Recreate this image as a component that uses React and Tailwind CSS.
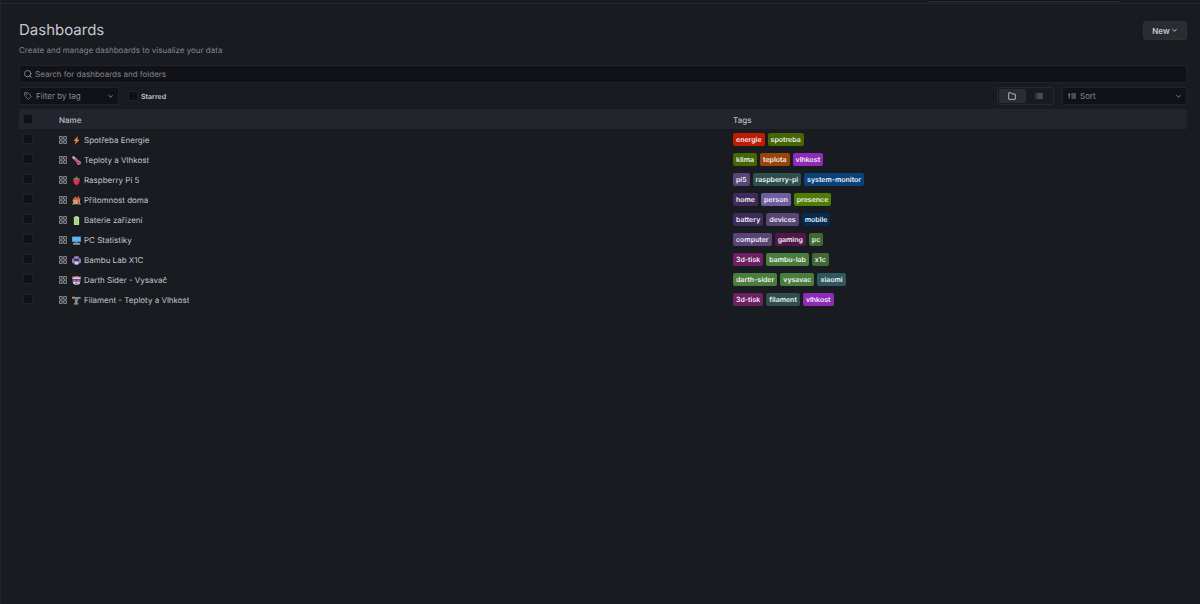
import React from 'react';

const ICONS = {
  bolt: (
    <>
      <path d="M16 0 4 13h6L6 24l14-14h-6z" fill="#f0703f" />
      <path d="M14 3 8 11h7l-5 8 8-8h-6z" fill="#fbb04c" />
    </>
  ),
  thermometer: (
    <>
      <path d="M4 4l12 11" stroke="#b9a3cf" strokeWidth="7" strokeLinecap="round" />
      <circle cx="18" cy="18" r="5.5" fill="#c9b3d8" />
      <path d="M8 8l9 9" stroke="#e0264f" strokeWidth="3" strokeLinecap="round" />
      <circle cx="18" cy="18" r="3.6" fill="#e0264f" />
    </>
  ),
  berry: (
    <>
      <path d="M3 9c0-4 18-4 18 0 0 7-4 15-9 15S3 16 3 9z" fill="#e2265a" />
      <path d="M4 5l5 0 3-5 3 5 5 0-3 5-5-1-5 1z" fill="#4ea33c" />
      <path d="M8 14h1M14 14h1M11 18h1" stroke="#ff8a9c" strokeWidth="2" />
    </>
  ),
  house: (
    <>
      <path d="M3 10h18v12H3z" fill="#eba36a" />
      <path d="M0 12 9 1l5 5h8v6H11L9 9l-6 4z" fill="#e8603f" />
      <path d="M15 1h4v8h-4z" fill="#c8684e" />
      <path d="M6 14h6v5H6z" fill="#5fb4e8" />
      <path d="M15 14h4v8h-4z" fill="#9a5a45" />
      <path d="M0 20h5v3H0zM20 20h4v3h-4z" fill="#4a9a49" />
    </>
  ),
  battery: (
    <>
      <path d="M9 0h6v3H9z" fill="#b9c4b9" />
      <rect x="5" y="2" width="14" height="22" rx="2" fill="#c2dcb5" />
      <path d="M7 5h10v17H7z" fill="#9bdc72" />
    </>
  ),
  computer: (
    <>
      <rect x="0" y="1" width="24" height="15" rx="1" fill="#3f93d6" />
      <path d="M2 3h20v10H2z" fill="#5fb9f2" />
      <path d="M9 16h6v2H9z" fill="#7f8fa3" />
      <path d="M4 18h16l2 5H2z" fill="#8f9bad" />
    </>
  ),
  printer: (
    <>
      <path d="M6 1h12v7H6z" fill="#a99bcb" />
      <rect x="0" y="5" width="24" height="15" rx="5" fill="#8d7cb5" />
      <path d="M6 7h12v7H6z" fill="#3f315f" />
      <path d="M7 15h10v8H7z" fill="#d9d3ea" />
    </>
  ),
  robot: (
    <>
      <path d="M0 1h6v7H0zM18 1h6v7h-6z" fill="#d9536b" />
      <rect x="2" y="1" width="20" height="22" rx="8" fill="#d3cae4" />
      <path d="M7 1h10v3H7z" fill="#e9773f" />
      <path d="M1 8h22v7H1z" fill="#59457c" />
      <path d="M5 10h4v3H5zM15 10h4v3h-4z" fill="#e8809f" />
      <path d="M8 18h8v2H8z" fill="#6d5a8e" />
    </>
  ),
  spool: (
    <>
      <path d="M9 3h14v4H9z" fill="#a5a9b0" />
      <path d="M0 2h9v5H0z" fill="#e28a3f" />
      <path d="M6 6h12l-3 9H8z" fill="#3f8fce" />
      <path d="M8 14h6v5H8z" fill="#d0874e" />
      <path d="M5 18h12v5H5z" fill="#b07a50" />
    </>
  ),
};

const TAG = {
  red: 'bg-[#bf1b00]',
  olive: 'bg-[#446603]',
  brown: 'bg-[#99440a]',
  violet: 'bg-[#8f2bb8]',
  plum: 'bg-[#584477]',
  teal: 'bg-[#2f4f4f]',
  blue: 'bg-[#0a437c]',
  indigo: 'bg-[#3f2b5b]',
  lilac: 'bg-[#705da0]',
  lime: 'bg-[#4f7d03]',
  navy: 'bg-[#052b51]',
  wine: 'bg-[#511749]',
  moss: 'bg-[#3f6833]',
  magenta: 'bg-[#6d1f62]',
  green: 'bg-[#4a7c3c]',
  cyan: 'bg-[#2f575e]',
};

const DASHBOARDS = [
  { icon: 'bolt', name: 'Spotřeba Energie', tags: [['energie', 'red'], ['spotreba', 'olive']] },
  { icon: 'thermometer', name: 'Teploty a Vlhkost', tags: [['klima', 'olive'], ['teplota', 'brown'], ['vlhkost', 'violet']] },
  { icon: 'berry', name: 'Raspberry Pi 5', tags: [['pi5', 'plum'], ['raspberry-pi', 'teal'], ['system-monitor', 'blue']] },
  { icon: 'house', name: 'Přítomnost doma', tags: [['home', 'indigo'], ['person', 'lilac'], ['presence', 'lime']] },
  { icon: 'battery', name: 'Baterie zařízení', tags: [['battery', 'indigo'], ['devices', 'plum'], ['mobile', 'navy']] },
  { icon: 'computer', name: 'PC Statistiky', tags: [['computer', 'plum'], ['gaming', 'wine'], ['pc', 'moss']] },
  { icon: 'printer', name: 'Bambu Lab X1C', tags: [['3d-tisk', 'magenta'], ['bambu-lab', 'green'], ['x1c', 'moss']] },
  { icon: 'robot', name: 'Darth Sider - Vysavač', tags: [['darth-sider', 'green'], ['vysavac', 'green'], ['xiaomi', 'cyan']] },
  { icon: 'spool', name: 'Filament - Teploty a Vlhkost', tags: [['3d-tisk', 'magenta'], ['filament', 'teal'], ['vlhkost', 'violet']] },
];

function Check({ label, id }) {
  return (
    <input
      type="checkbox"
      id={id}
      aria-label={label}
      className="block size-[10px] shrink-0 appearance-none rounded-[2px] border border-[#212226] bg-[#101116] checked:bg-[#3d71d9]"
    />
  );
}

function Chevron() {
  return (
    <svg viewBox="0 0 24 24" className="size-[7px] shrink-0" fill="none" stroke="currentColor" strokeWidth="3.4" strokeLinecap="round" strokeLinejoin="round" aria-hidden="true">
      <path d="M6 9l6 5 6-5" />
    </svg>
  );
}

function AppsIcon() {
  return (
    <svg viewBox="0 0 8 8" className="size-2 shrink-0 text-[#a9aab4]" fill="none" stroke="currentColor" strokeWidth="0.8" aria-hidden="true">
      <path d="M.5 .5h2.700v2.700H.5zM4.700 .5h2.700v2.700H4.700zM.5 4.700h2.700v2.700H.5zM4.700 4.700h2.700v2.700H4.700z" />
    </svg>
  );
}

const BOX = 'flex h-[18px] items-center rounded-[2px] border border-[#212328] bg-[#111217] text-[#85868f]';
const SELECT = 'h-full w-full min-w-0 flex-1 appearance-none bg-transparent text-[8px] leading-4 outline-none';

export default function App() {
  return (
    <div className="min-h-screen border-l border-[#22252b] bg-[#181b1f] font-['Inter',sans-serif] text-[8px] leading-3 text-[#bfc0ca] [text-rendering:geometricPrecision]">
      <div className="flex h-1 justify-end border-b border-[#24262b] pr-20">
        <div className="h-[2px] w-48 rounded-b-[2px] border-b border-[#2b2d32] bg-[#111217]" />
      </div>

      <main className="pt-4 pr-[13px] pl-[18px]">
        <header className="flex items-start justify-between">
          <div>
            <h1 className="text-[15px] leading-5 text-[#c6c7d2]">Dashboards</h1>
            <p className="mt-1 text-[#85868f]">Create and manage dashboards to visualize your data</p>
          </div>
          <button type="button" className="mt-px flex h-[19px] w-11 items-center justify-center gap-px rounded-[3px] border border-[#303136] bg-[#2b2c31] font-semibold text-[#c6c7d2]">
            New
            <Chevron />
          </button>
        </header>

        <label className={`${BOX} mt-[9px] gap-[3px] px-1`}>
          <svg viewBox="0 0 24 24" className="size-2 shrink-0 text-[#9b9ca6]" fill="none" stroke="currentColor" strokeWidth="2.4" strokeLinecap="round" aria-hidden="true">
            <circle cx="11" cy="11" r="9.5" />
            <path d="M18 18 22.5 22.5" />
          </svg>
          <input
            type="text"
            aria-label="Search for dashboards and folders"
            placeholder="Search for dashboards and folders"
            className="h-full min-w-0 flex-1 bg-transparent outline-none [text-rendering:geometricPrecision] placeholder:text-[#85868f]"
          />
        </label>

        <div className="mt-1 flex items-center">
          <label className={`${BOX} w-[100px] gap-1 px-1`}>
            <svg viewBox="0 0 24 24" className="size-2 shrink-0" fill="none" stroke="currentColor" strokeWidth="2.4" strokeLinejoin="round" aria-hidden="true">
              <path d="M2 2v9l11 11 9-9L11 2z" />
              <circle cx="7.5" cy="7.5" r="1.4" />
            </svg>
            <select aria-label="Filter by tag" className={SELECT}>
              <option>Filter by tag</option>
            </select>
            <Chevron />
          </label>

          <div className="ml-[9px] flex items-center gap-[3px]">
            <Check id="starred" label="Starred" />
            <label htmlFor="starred" className="text-[7px] leading-[13px] font-semibold text-[#c6c7d2]">Starred</label>
          </div>

          <div className="ml-auto flex h-[18px] w-[57px] rounded-[2px] border border-[#26282d] p-px">
            <button type="button" aria-label="View by folders" aria-pressed="true" className="flex flex-1 items-center justify-center rounded-[2px] bg-[#2a2c31] text-[#c6c7d2]">
              <svg viewBox="0 0 24 24" className="size-2" fill="none" stroke="currentColor" strokeWidth="2.6" strokeLinejoin="round" aria-hidden="true">
                <path d="M2 3q0-1 1-1h6l3 4h9q1 0 1 1v14q0 1-1 1H3q-1 0-1-1z" />
              </svg>
            </button>
            <button type="button" aria-label="View as list" aria-pressed="false" className="flex flex-1 items-center justify-center text-[#7c7d85]">
              <svg viewBox="0 0 24 24" className="size-2" fill="none" stroke="currentColor" strokeWidth="3.4" aria-hidden="true">
                <path d="M1 6h3M6 6h17M1 12h3M6 12h17M1 18h3M6 18h17" />
              </svg>
            </button>
          </div>

          <label className={`${BOX} ml-2 w-[125px] gap-1 pr-1 pl-[5px]`}>
            <svg viewBox="0 0 24 24" className="size-2 shrink-0" fill="none" stroke="currentColor" strokeWidth="3" aria-hidden="true">
              <path d="M3.5 19V6M0 9l3.5-4L7 9M10 6h14M10 12h14M10 18h14" />
            </svg>
            <select aria-label="Sort" className={SELECT}>
              <option>Sort</option>
            </select>
            <Chevron />
          </label>
        </div>

        <table className="mt-1 w-full table-fixed border-collapse text-left leading-[13px]">
          <colgroup>
            <col className="w-10" />
            <col />
            <col className="w-[454px]" />
          </colgroup>
          <thead>
            <tr className="h-5 bg-[#22252b]">
              <th className="p-0 pl-1"><Check label="Select all" /></th>
              <th className="p-0 pt-[2px] font-medium">Name</th>
              <th className="p-0 pt-[2px] font-medium">Tags</th>
            </tr>
          </thead>
          <tbody>
            {DASHBOARDS.map((d) => (
              <tr key={d.name} className="h-5">
                <td className="p-0 pl-1"><Check label={`Select ${d.name}`} /></td>
                <td className="p-0 pt-[2px]">
                  <div className="flex items-center">
                    <AppsIcon />
                    <a href="#" className="ml-[5px] flex items-center gap-[3px] text-[#c6c7d2]">
                      <svg viewBox="0 0 24 24" className="size-[9px] shrink-0" fill="none" aria-hidden="true">{ICONS[d.icon]}</svg>
                      {d.name}
                    </a>
                  </div>
                </td>
                <td className="p-0">
                  <ul className="flex gap-[3px]">
                    {d.tags.map(([name, tone]) => (
                      <li key={name} className={`${TAG[tone]} h-[13px] rounded-[2px] px-[3px] text-[7px] font-semibold text-[#f0f0f4]`}>
                        {name}
                      </li>
                    ))}
                  </ul>
                </td>
              </tr>
            ))}
          </tbody>
        </table>
      </main>
    </div>
  );
}
